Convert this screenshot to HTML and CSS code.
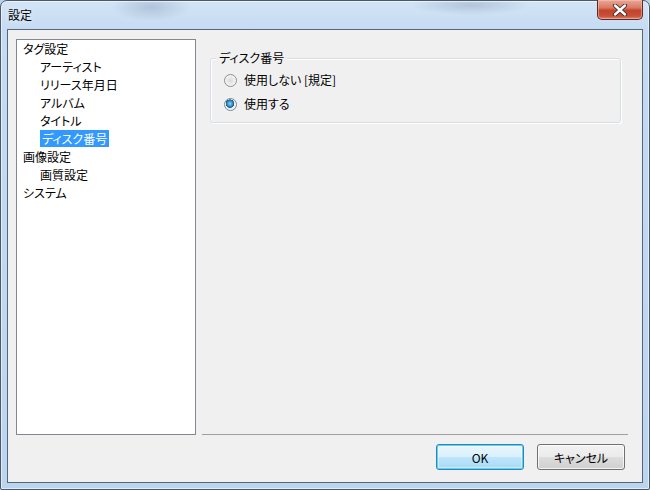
FILE: index.html
```html
<!DOCTYPE html>
<html lang="ja">
<head>
<meta charset="utf-8">
<title>設定</title>
<link rel="stylesheet" href="styles.css">
</head>
<body>
<div class="window">
  <div class="titlebar">
    <span class="title">設定</span>
    <button class="close" aria-label="閉じる">
      <svg width="16" height="12" viewBox="0 0 16 12">
        <path d="M3 1.5 L13 10.5 M13 1.5 L3 10.5" stroke="#3b2a28" stroke-width="4.2" stroke-linecap="round"/>
        <path d="M3 1.5 L13 10.5 M13 1.5 L3 10.5" stroke="#ffffff" stroke-width="2.4" stroke-linecap="round"/>
      </svg>
    </button>
  </div>
  <div class="client">
    <div class="main">
      <ul class="tree">
        <li class="node">タグ設定</li>
        <li class="node child">アーティスト</li>
        <li class="node child">リリース年月日</li>
        <li class="node child">アルバム</li>
        <li class="node child">タイトル</li>
        <li class="node child"><span class="selected">ディスク番号</span></li>
        <li class="node">画像設定</li>
        <li class="node child">画質設定</li>
        <li class="node">システム</li>
      </ul>
      <div class="pane">
        <div class="group">
          <div class="caption">ディスク番号</div>
          <label class="radio-row first"><span class="radio"></span>使用しない [規定]</label>
          <label class="radio-row"><span class="radio checked"></span>使用する</label>
        </div>
      </div>
    </div>
    <div class="buttons">
      <button class="btn default">OK</button>
      <button class="btn">キャンセル</button>
    </div>
  </div>
</div>
</body>
</html>
```
FILE: styles.css
```css
* { box-sizing: border-box; }
html, body { margin: 0; padding: 0; }
body {
  width: 650px;
  height: 490px;
  overflow: hidden;
  font-family: "Noto Sans CJK JP", "Noto Sans", sans-serif;
  font-size: 12px;
  font-feature-settings: "palt";
  color: #000;
  background: #b9d2ec;
}
.window {
  width: 650px;
  height: 490px;
  display: flex;
  flex-direction: column;
  border: 1px solid #4a5a6c;
  border-radius: 7px 7px 2px 2px;
  background:
    radial-gradient(ellipse 40px 14px at 150px 6px, rgba(120,140,165,0.35), rgba(120,140,165,0) 100%),
    radial-gradient(ellipse 60px 10px at 470px 4px, rgba(120,140,165,0.35), rgba(120,140,165,0) 100%),
    linear-gradient(to bottom, #d3e4f6 0px, #c4dbf2 30px, #bcd5ee 100%);
  box-shadow: inset 0 0 0 1px rgba(255,255,255,0.55);
  padding: 0 6px 6px 6px;
}
.titlebar {
  height: 28px;
  display: flex;
  justify-content: space-between;
  align-items: flex-start;
  flex: none;
}
.title {
  margin-top: 6px;
  margin-left: 1px;
  font-size: 12px;
  line-height: 16px;
  text-shadow: 0 0 6px rgba(255,255,255,0.9);
}
.close {
  width: 46px;
  height: 20px;
  margin-top: -1px;
  margin-right: 0;
  padding: 0;
  border: 1px solid #5a2a24;
  border-top: none;
  border-radius: 0 0 5px 5px;
  background: linear-gradient(to bottom, #e9a898 0%, #d97a64 40%, #c4442b 55%, #c9503a 85%, #e08a70 100%);
  box-shadow: inset 0 0 0 1px rgba(255,200,190,0.5);
  display: flex;
  align-items: center;
  justify-content: center;
}
.client {
  flex: 1;
  display: flex;
  flex-direction: column;
  border: 1px solid #56677a;
  background: #f0f0f0;
  padding: 9px 0 0 8px;
}
.main {
  display: flex;
  height: 396px;
  flex: none;
}
.tree {
  width: 180px;
  height: 396px;
  margin: 0;
  padding: 0 0 0 6px;
  list-style: none;
  background: #ffffff;
  border: 1px solid #828790;
}
.node {
  height: 18px;
  line-height: 18px;
  white-space: nowrap;
}
.node.child { padding-left: 17px; }
.selected {
  display: inline-block;
  background: #3399ff;
  color: #ffffff;
  padding: 0 2px;
  line-height: 17px;
  height: 17px;
}
.pane {
  width: 426px;
  margin-left: 6px;
  border-bottom: 1px solid #a0a0a0;
  padding: 19px 0 0 8px;
}
.group {
  width: 411px;
  height: 65px;
  border: 1px solid #d5dfe5;
  border-radius: 3px;
  box-shadow: inset 1px 1px 0 #ffffff, 1px 1px 0 #ffffff;
  padding: 0 0 0 13px;
}
.caption {
  display: block;
  width: max-content;
  margin: -9px 0 0 -8px;
  padding: 0 3px 0 3px;
  background: #f0f0f0;
  line-height: 16px;
  height: 16px;
}
.radio-row {
  display: flex;
  align-items: center;
  height: 24px;
  line-height: 24px;
}
.radio-row.first { margin-top: 2px; }
.radio {
  width: 13px;
  height: 13px;
  border-radius: 50%;
  border: 1px solid #8e8f8f;
  background: radial-gradient(circle at 50% 50%, #d9dadb 0%, #f1f1f1 60%, #ffffff 100%);
  margin-right: 7px;
  flex: none;
}
.radio.checked {
  border-color: #6f8ba3;
  background:
    radial-gradient(circle at 45% 42%, #8fd6f2 0%, #3b8ec2 30%, #1b5a86 46%, rgba(27,90,134,0) 50%),
    radial-gradient(circle at 50% 50%, #d9dadb 0%, #f1f1f1 60%, #ffffff 100%);
}
.buttons {
  display: flex;
  justify-content: flex-end;
  gap: 13px;
  padding: 9px 17px 0 0;
}
.btn {
  width: 88px;
  height: 26px;
  padding: 0;
  font-family: inherit;
  font-size: 12px;
  font-feature-settings: "palt";
  color: #000;
  border: 1px solid #707070;
  border-radius: 3px;
  background: linear-gradient(to bottom, #f2f2f2 0%, #ebebeb 50%, #dddddd 51%, #cfcfcf 100%);
  box-shadow: inset 0 0 0 1px rgba(255,255,255,0.75);
}
.btn.default {
  border-color: #3c7fb1;
  background: linear-gradient(to bottom, #eaf6fd 0%, #d9f0fc 50%, #bee6fd 51%, #a7d9f5 100%);
  box-shadow: inset 0 0 0 1px #48d8fb, inset 0 0 0 2px rgba(255,255,255,0.4);
}
```
